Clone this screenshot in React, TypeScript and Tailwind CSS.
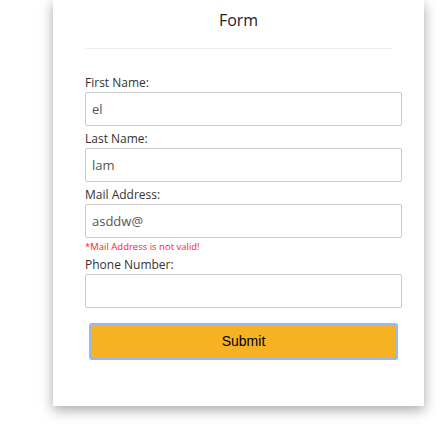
import { useState } from 'react';

const font = { fontFamily: '"Open Sans", "Noto Sans", sans-serif' };

function Field({ label, value, onChange }: { label: string; value: string; onChange: (v: string) => void }) {
  return (
    <div className="flex flex-col">
      <label className="text-[12px] leading-[16px] text-[#333]">{label}</label>
      <input
        type="text"
        value={value}
        onChange={(e) => onChange(e.target.value)}
        className="mt-[1px] h-[34px] w-[317px] rounded-[2px] border border-[#ccc] bg-white px-[6px] text-[13px] text-[#555] outline-none"
      />
    </div>
  );
}

export default function App() {
  const [first, setFirst] = useState('el');
  const [last, setLast] = useState('lam');
  const [mail, setMail] = useState('asddw@');
  const [phone, setPhone] = useState('');

  const mailValid = /^\S+@\S+\.\S+$/.test(mail);

  return (
    <div className="h-[429px] w-[440px] overflow-hidden bg-white" style={font}>
      <div className="ml-[53px] w-[371px] bg-white px-8 pt-[8px] pb-[46px] shadow-[0_4px_12px_rgba(0,0,0,0.35)]">
        {/* Header */}
        <h1 className="text-center text-[16px] leading-[24px] text-[#222]">Form</h1>
        <div className="mt-[16px] border-t border-[#eee]" />

        {/* Fields */}
        <div className="mt-[26px] flex flex-col">
          <Field label="First Name:" value={first} onChange={setFirst} />
          <div className="mt-[5px]">
            <Field label="Last Name:" value={last} onChange={setLast} />
          </div>
          <div className="mt-[5px]">
            <Field label="Mail Address:" value={mail} onChange={setMail} />
          </div>
          {!mailValid && (
            <p className="mt-[3px] text-[9.5px] leading-[11px] text-[#ff1a1a]">*Mail Address is not valid!</p>
          )}
          <div className="mt-[5px]">
            <Field label="Phone Number:" value={phone} onChange={setPhone} />
          </div>
        </div>

        <button
          className="mt-[15px] ml-[4px] h-[37px] w-[309px] rounded-[3px] border-2 border-[#94b9f5] bg-[#f6b222] text-[14px] text-black"
          style={{ fontFamily: '"Liberation Sans", Arial, sans-serif' }}
        >
          Submit
        </button>
      </div>
    </div>
  );
}
